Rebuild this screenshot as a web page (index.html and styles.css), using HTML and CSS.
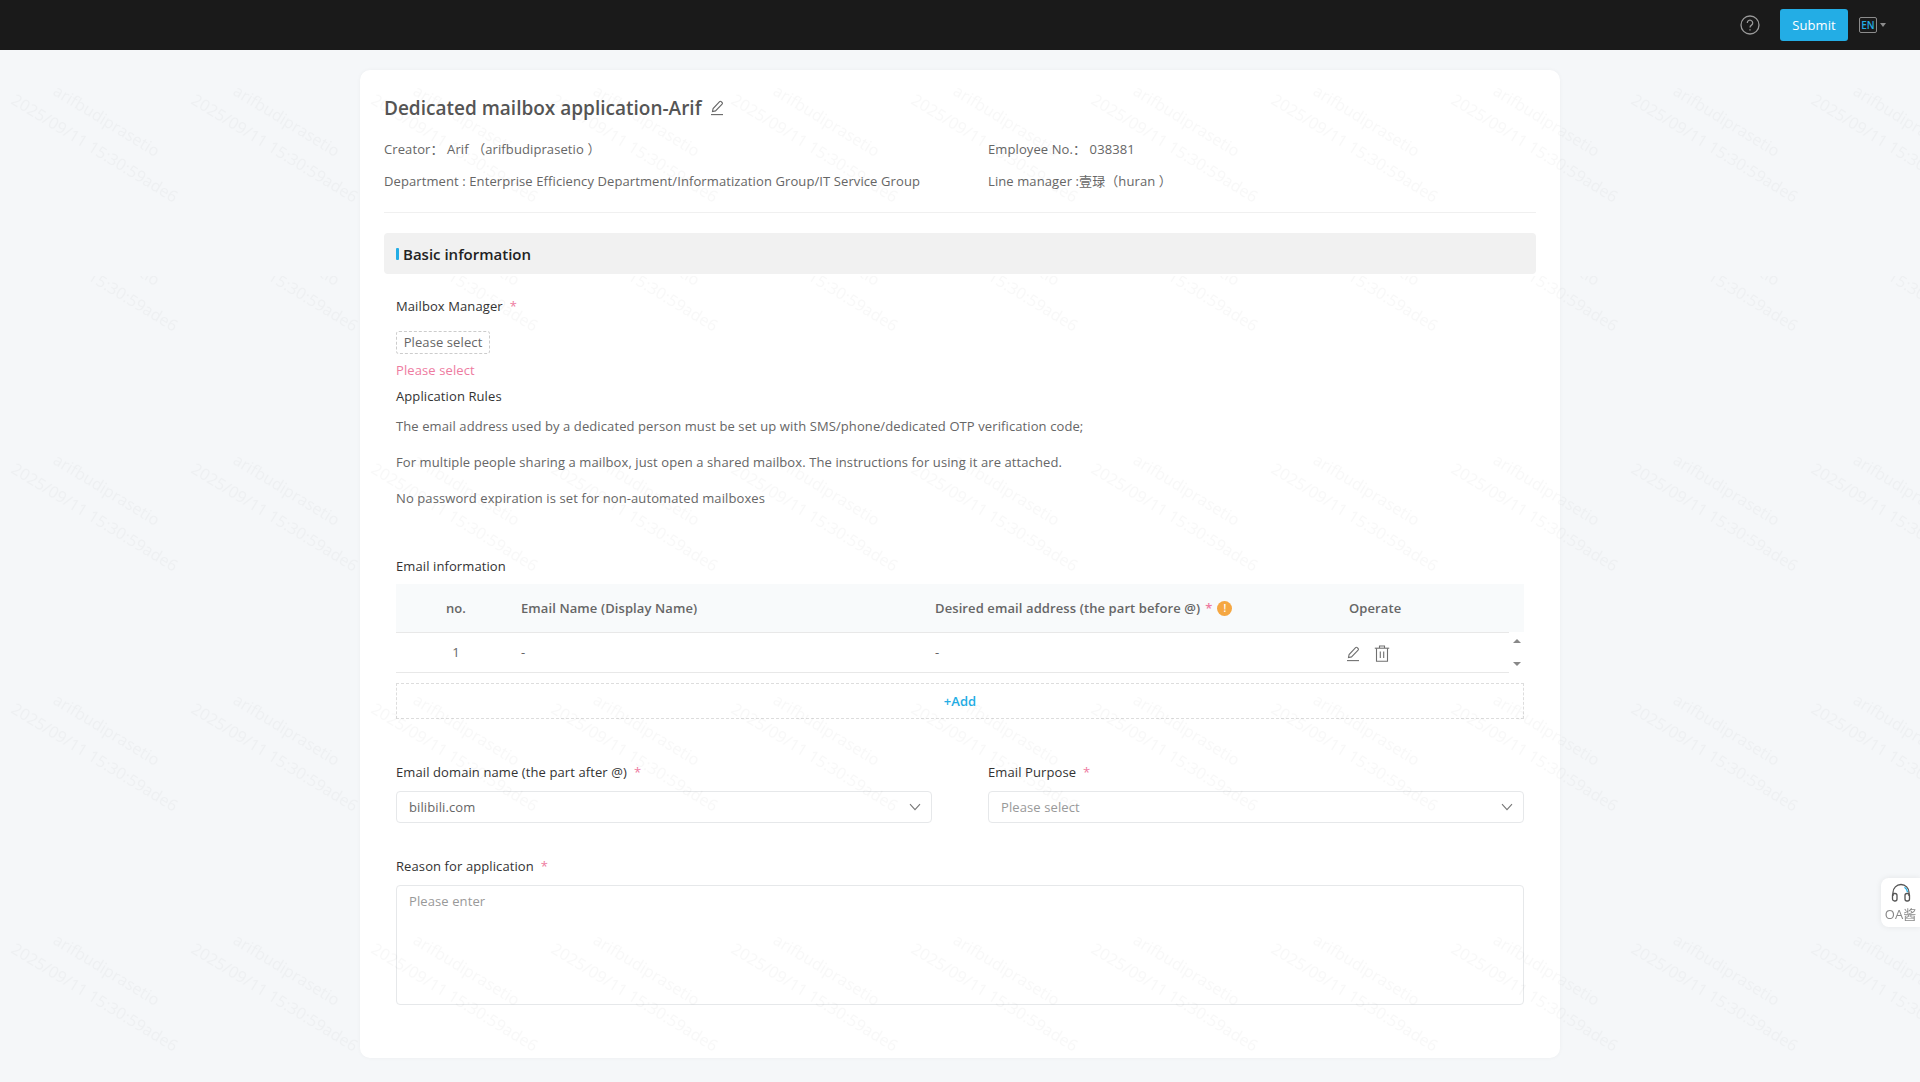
FILE: index.html
```html
<!DOCTYPE html>
<html lang="en">
<head>
    <meta charset="UTF-8">
    <meta name="viewport" content="width=device-width, initial-scale=1.0">
    <title>Dedicated mailbox application</title>
    <link rel="stylesheet" href="styles.css">
</head>
<body>
    <header class="topbar">
        <svg class="help-icon" viewBox="0 0 20 20" width="20" height="20">
            <circle cx="10" cy="10" r="9"/>
            <path d="M7.3 7.9a2.7 2.7 0 1 1 4.2 2.2c-1 .7-1.5 1.1-1.5 2.4"/>
            <path d="M10 14.2v1.2"/>
        </svg>
        <button class="btn-submit">Submit</button>
        <div class="lang">
            <span class="lang-box">EN</span>
            <span class="lang-caret"></span>
        </div>
    </header>

    <main class="page">
        <section class="card">
            <h1 class="title">Dedicated mailbox application-Arif
                <svg class="pen" viewBox="0 0 14 16" width="14" height="16">
                    <path d="M2.5 11.5l.6-3L9.6 1.6c.5-.5 1.1-.5 1.6 0l.9.9c.5.5.5 1.1 0 1.6L5.5 10.9z"/>
                    <path d="M1 14.6h12"/>
                </svg>
            </h1>
            <div class="meta">
                <div>Creator： Arif （arifbudiprasetio ）</div>
                <div>Employee No.： 038381</div>
                <div>Department : Enterprise Efficiency Department/Informatization Group/IT Service Group</div>
                <div>Line manager :壹琭（huran ）</div>
            </div>

            <h2 class="section-bar"><span class="section-mark"></span>Basic information</h2>

            <div class="form">
                <div class="label">Mailbox Manager<span class="req">*</span></div>
                <div class="picker">Please select</div>
                <div class="error">Please select</div>
                <div class="label rules-title">Application Rules</div>
                <p class="rule">The email address used by a dedicated person must be set up with SMS/phone/dedicated OTP verification code;</p>
                <p class="rule">For multiple people sharing a mailbox, just open a shared mailbox. The instructions for using it are attached.</p>
                <p class="rule">No password expiration is set for non-automated mailboxes</p>

                <div class="label email-title">Email information</div>
                <div class="table-wrap">
                    <table class="table">
                        <colgroup>
                            <col class="col-no">
                            <col class="col-text">
                            <col class="col-text">
                            <col>
                        </colgroup>
                        <thead>
                            <tr>
                                <th class="cell-no">no.</th>
                                <th>Email Name (Display Name)</th>
                                <th>Desired email address (the part before @)<span class="req req-th">*</span><span class="info">!</span></th>
                                <th>Operate</th>
                            </tr>
                        </thead>
                        <tbody>
                            <tr>
                                <td class="cell-no">1</td>
                                <td>-</td>
                                <td>-</td>
                                <td class="ops">
                                    <svg class="op-icon" viewBox="0 0 14 16" width="14" height="16">
                                        <path d="M2.5 11.5l.6-3L9.6 1.6c.5-.5 1.1-.5 1.6 0l.9.9c.5.5.5 1.1 0 1.6L5.5 10.9z"/>
                                        <path d="M1 14.6h12"/>
                                    </svg>
                                    <svg class="op-icon" viewBox="0 0 16 17" width="16" height="17">
                                        <path d="M.8 3.2h14.4"/>
                                        <path d="M5.5 3V1h5v2"/>
                                        <path d="M2.5 3.2v13h11v-13"/>
                                        <path d="M6.3 6.5v6.5M9.7 6.5v6.5"/>
                                    </svg>
                                </td>
                            </tr>
                        </tbody>
                    </table>
                    <div class="scroll-arrows">
                        <span class="arrow-up"></span>
                        <span class="arrow-down"></span>
                    </div>
                </div>
                <div class="add-row">+Add</div>

                <div class="two-col">
                    <div>
                        <div class="label">Email domain name (the part after @)<span class="req">*</span></div>
                        <div class="select">
                            <span>bilibili.com</span>
                            <svg class="chevron" viewBox="0 0 12 8" width="12" height="8"><path d="M1 1.2l5 5.4 5-5.4"/></svg>
                        </div>
                    </div>
                    <div>
                        <div class="label">Email Purpose<span class="req">*</span></div>
                        <div class="select is-empty">
                            <span>Please select</span>
                            <svg class="chevron" viewBox="0 0 12 8" width="12" height="8"><path d="M1 1.2l5 5.4 5-5.4"/></svg>
                        </div>
                    </div>
                </div>

                <div class="label reason-title">Reason for application<span class="req">*</span></div>
                <div class="textarea">Please enter</div>
            </div>
        </section>
    </main>

    <aside class="oa-float">
        <svg viewBox="0 0 22 20" width="22" height="20">
            <path class="oa-line" d="M3 13V9.500a8 8 0 0 1 16 0V13"/>
            <path class="oa-accent" d="M14.500 4.200a6.500 6.500 0 0 1 3 5"/>
            <rect class="oa-line" x="2.500" y="10.500" width="4.500" height="7.500" rx="2"/>
            <rect class="oa-line" x="15" y="10.500" width="4.500" height="7.500" rx="2"/>
        </svg>
        <span>OA酱</span>
    </aside>

    <!-- watermark tiles, top block and the rest of the page are offset differently -->
    <svg class="watermark" width="1920" height="1082">
        <defs>
            <pattern id="wm-top" patternUnits="userSpaceOnUse" x="5" y="70" width="180" height="240">
                <text transform="translate(47 24) rotate(31.500)">arifbudiprasetio</text>
                <text transform="translate(5 33) rotate(31.500)">2025/09/11 15:30:59ade6</text>
            </pattern>
            <pattern id="wm-rest" patternUnits="userSpaceOnUse" x="5" y="199" width="180" height="240">
                <text transform="translate(47 24) rotate(31.500)">arifbudiprasetio</text>
                <text transform="translate(5 33) rotate(31.500)">2025/09/11 15:30:59ade6</text>
            </pattern>
        </defs>
        <rect x="0" y="50" width="1920" height="226" fill="url(#wm-top)"/>
        <rect x="0" y="276" width="1920" height="806" fill="url(#wm-rest)"/>
    </svg>
</body>
</html>
```
FILE: styles.css
```css
*{
    margin: 0;
    padding: 0;
    box-sizing: border-box;
}
body{
    height: 1082px;
    overflow: hidden;
    background: #f5f7f9;
    color: #666;
    font-family: "Open Sans", "Noto Sans CJK SC", sans-serif;
    font-size: 13px;
    letter-spacing: .1px;
    line-height: 20px;
}

/* top bar */
.topbar{
    height: 50px;
    background: #1a1a1a;
    display: flex;
    align-items: center;
    justify-content: flex-end;
    padding-right: 34px;
}
.help-icon{
    fill: none;
    stroke: #9a9a9a;
    stroke-width: 1.3;
    margin-right: 20px;
}
.btn-submit{
    width: 68px;
    height: 32px;
    border: none;
    border-radius: 3px;
    background: #23ade5;
    color: #fff;
    font: inherit;
    letter-spacing: inherit;
}
.lang{
    display: flex;
    align-items: center;
    margin-left: 11px;
}
.lang-box{
    width: 18px;
    height: 16px;
    border: 1px solid #8c8c8c;
    border-radius: 2px;
    color: #23ade5;
    font-size: 10px;
    font-weight: 600;
    line-height: 14px;
    text-align: center;
    letter-spacing: 0;
}
.lang-caret{
    margin-left: 3px;
    border: 3px solid transparent;
    border-top: 4px solid #8c8c8c;
    border-bottom: none;
}

/* card */
.page{
    padding-top: 20px;
}
.card{
    width: 1200px;
    height: 988px;
    margin: 0 auto;
    padding: 24px 24px 0;
    background: #fff;
    border-radius: 10px;
    box-shadow: 0 0 4px rgba(0, 0, 0, .04);
}
.title{
    display: flex;
    align-items: center;
    gap: 8px;
    height: 28px;
    font-size: 19px;
    font-weight: 600;
    letter-spacing: 0;
    color: #555;
}
.pen{
    fill: none;
    stroke: #666;
    stroke-width: 1.100;
}
.meta{
    display: grid;
    grid-template-columns: 604px 1fr;
    row-gap: 12px;
    margin-top: 17px;
    padding-bottom: 21px;
    border-bottom: 1px solid #f0f0f0;
}
.section-bar{
    display: flex;
    align-items: center;
    height: 41px;
    margin-top: 20px;
    padding-left: 12px;
    background: #f1f1f1;
    border-radius: 4px;
    color: #222;
    font-size: 15px;
    font-weight: 600;
    letter-spacing: 0;
}
.section-mark{
    width: 3px;
    height: 12px;
    margin-right: 4px;
    background: #23ade5;
    border-radius: 1px;
}

/* form */
.form{
    padding: 22px 12px 0;
}
.label{
    color: #333;
}
.req{
    margin-left: 7px;
    color: #ee7ba0;
}
.picker{
    width: 94px;
    height: 23px;
    margin-top: 15px;
    border: 1px dashed #ccc;
    border-radius: 3px;
    line-height: 21px;
    text-align: center;
}
.error{
    margin-top: 6px;
    color: #ee7ba0;
}
.rules-title{
    margin-top: 6px;
}
.rule{
    margin-top: 16px;
}
.rule:first-of-type{
    margin-top: 10px;
}
.email-title{
    margin-top: 48px;
}
.table-wrap{
    position: relative;
    margin-top: 8px;
}
.table{
    width: 100%;
    table-layout: fixed;
    border-collapse: collapse;
}
.col-no{
    width: 109px;
}
.col-text{
    width: 414px;
}
.table th{
    height: 48px;
    padding-left: 16px;
    background: #f8fafb;
    border-bottom: 1px solid #e8e8e8;
    color: #666;
    font-weight: 600;
    text-align: left;
}
.table td{
    height: 40px;
    padding-left: 16px;
    border-bottom: 1px solid #e8e8e8;
}
.table .cell-no{
    padding-left: 11px;
    padding-right: 0;
    text-align: center;
}
.req-th{
    margin-left: 5px;
}
.info{
    display: inline-block;
    width: 15px;
    height: 15px;
    margin-left: 5px;
    border-radius: 50%;
    background: #f5a742;
    color: #fff;
    font-size: 10px;
    line-height: 15px;
    text-align: center;
    vertical-align: 1px;
}
.table .ops{
    padding-left: 13px;
    white-space: nowrap;
}
.op-icon{
    fill: none;
    stroke: #707070;
    stroke-width: 1.100;
    vertical-align: middle;
}
.op-icon + .op-icon{
    margin-left: 11px;
}
.scroll-arrows{
    position: absolute;
    right: 0;
    top: 48px;
    width: 15px;
    height: 41px;
    background: #fff;
    display: flex;
    flex-direction: column;
    align-items: center;
    justify-content: space-between;
    padding: 7px 0 7px;
}
.arrow-up{
    border: 4px solid transparent;
    border-bottom: 4px solid #888;
    border-top: none;
}
.arrow-down{
    border: 4px solid transparent;
    border-top: 4px solid #888;
    border-bottom: none;
}
.add-row{
    height: 36px;
    margin-top: 10px;
    border: 1px dashed #ddd;
    color: #23ade5;
    font-weight: 600;
    line-height: 34px;
    text-align: center;
}
.two-col{
    display: grid;
    grid-template-columns: 536px 536px;
    column-gap: 56px;
    margin-top: 43px;
}
.select{
    display: flex;
    align-items: center;
    justify-content: space-between;
    height: 32px;
    margin-top: 9px;
    padding: 0 10px 0 12px;
    border: 1px solid #e6e8ea;
    border-radius: 4px;
}
.select.is-empty{
    color: #999;
}
.chevron{
    fill: none;
    stroke: #777;
    stroke-width: 1.100;
}
.reason-title{
    margin-top: 33px;
}
.textarea{
    height: 120px;
    margin-top: 9px;
    padding: 5px 12px;
    border: 1px solid #e6e8ea;
    border-radius: 4px;
    color: #999;
}

/* floating helper */
.oa-float{
    position: fixed;
    right: 0;
    top: 878px;
    width: 39px;
    height: 49px;
    padding-top: 5px;
    background: #fff;
    border-radius: 8px 0 0 8px;
    box-shadow: 0 0 6px rgba(0, 0, 0, .08);
    display: flex;
    flex-direction: column;
    align-items: center;
    gap: 3px;
    color: #888;
    font-size: 13px;
    line-height: 16px;
    letter-spacing: 0;
    white-space: nowrap;
}
.oa-line{
    fill: none;
    stroke: #555;
    stroke-width: 1.300;
}
.oa-accent{
    fill: none;
    stroke: #23ade5;
    stroke-width: 1.300;
}

/* watermark sits over everything and catches nothing */
.watermark{
    position: fixed;
    left: 0;
    top: 0;
    pointer-events: none;
}
.watermark text{
    fill: #000;
    fill-opacity: .028;
    font-family: "Open Sans", sans-serif;
    font-size: 16px;
    letter-spacing: .1px;
}
```
